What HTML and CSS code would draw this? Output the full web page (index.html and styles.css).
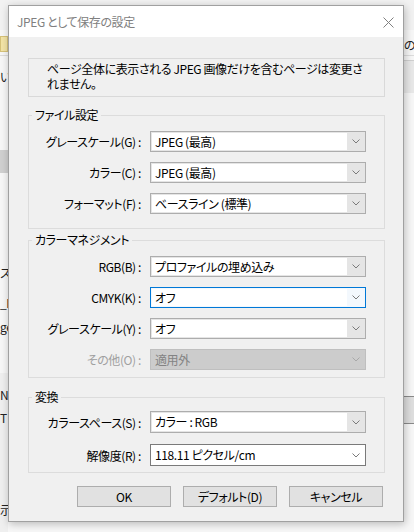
FILE: index.html
```html
<!DOCTYPE html>
<html lang="ja">
<head>
    <meta charset="UTF-8">
    <meta name="viewport" content="width=device-width, initial-scale=1.0">
    <title>JPEG として保存の設定</title>
    <link rel="stylesheet" href="styles.css">
</head>
<body>

    <div class="desktop">
        <!-- 背景のアプリ画面 -->
        <div class="app">
            <div class="app-top"></div>
            <div class="app-folder"></div>
            <div class="app-line l1"></div>
            <div class="app-text t1">い</div>
            <div class="app-block b1"></div>
            <div class="app-text t2">ス</div>
            <div class="app-text t3">_IN</div>
            <div class="app-text t4">ge</div>
            <div class="app-band"></div>
            <div class="app-text t5">N]</div>
            <div class="app-text t6">T</div>
            <div class="app-text t7">示</div>
            <div class="app-text r1">の</div>
            <div class="app-rband r2"></div>
            <div class="app-rband r3"></div>
        </div>

        <!-- ダイアログ -->
        <div class="dialog">
            <div class="titlebar">
                <span class="title">JPEG として保存の設定</span>
                <svg class="close" width="11" height="11" viewBox="0 0 11 11">
                    <path d="M0.5 0.5 L10.5 10.5 M10.5 0.5 L0.5 10.5" />
                </svg>
            </div>

            <div class="dialog-body">
                <div class="notice">
                    <div class="line">ページ全体に表示される JPEG 画像だけを含むページは変更さ</div>
                    <div class="line">れません。</div>
                </div>

                <fieldset class="group g1">
                    <legend>ファイル設定</legend>
                    <label>グレースケール(G) :</label>
                    <div class="combo"><span class="value">JPEG (最高)</span><span class="arrow"><svg viewBox="0 0 8 5"><polyline points="0.5,0.5 4,4 7.5,0.5" /></svg></span></div>

                    <label>カラー(C) :</label>
                    <div class="combo"><span class="value">JPEG (最高)</span><span class="arrow"><svg viewBox="0 0 8 5"><polyline points="0.5,0.5 4,4 7.5,0.5" /></svg></span></div>

                    <label>フォーマット(F) :</label>
                    <div class="combo"><span class="value">ベースライン (標準)</span><span class="arrow"><svg viewBox="0 0 8 5"><polyline points="0.5,0.5 4,4 7.5,0.5" /></svg></span></div>
                </fieldset>

                <fieldset class="group g2">
                    <legend>カラーマネジメント</legend>
                    <label>RGB(B) :</label>
                    <div class="combo"><span class="value">プロファイルの埋め込み</span><span class="arrow"><svg viewBox="0 0 8 5"><polyline points="0.5,0.5 4,4 7.5,0.5" /></svg></span></div>

                    <label>CMYK(K) :</label>
                    <div class="combo focus"><span class="value">オフ</span><span class="arrow"><svg viewBox="0 0 8 5"><polyline points="0.5,0.5 4,4 7.5,0.5" /></svg></span></div>

                    <label>グレースケール(Y) :</label>
                    <div class="combo"><span class="value">オフ</span><span class="arrow"><svg viewBox="0 0 8 5"><polyline points="0.5,0.5 4,4 7.5,0.5" /></svg></span></div>

                    <label class="disabled">その他(O) :</label>
                    <div class="combo disabled"><span class="value">適用外</span><span class="arrow"><svg viewBox="0 0 8 5"><polyline points="0.5,0.5 4,4 7.5,0.5" /></svg></span></div>
                </fieldset>

                <fieldset class="group g3">
                    <legend>変換</legend>
                    <label>カラースペース(S) :</label>
                    <div class="combo"><span class="value">カラー : RGB</span><span class="arrow"><svg viewBox="0 0 8 5"><polyline points="0.5,0.5 4,4 7.5,0.5" /></svg></span></div>

                    <label>解像度(R) :</label>
                    <div class="combo edit"><span class="value">118.11 ピクセル/cm</span><span class="arrow"><svg viewBox="0 0 8 5"><polyline points="0.5,0.5 4,4 7.5,0.5" /></svg></span></div>
                </fieldset>

                <div class="buttons">
                    <button>OK</button>
                    <button>デフォルト(D)</button>
                    <button>キャンセル</button>
                </div>
            </div>
        </div>
    </div>

</body>
</html>
```

FILE: styles.css
```css
body {
    margin: 0;
    padding: 0;
    font-family: "Noto Sans CJK JP", "Noto Sans", sans-serif;
    font-size: 12px;
    font-feature-settings: "palt";
    letter-spacing: -0.4px;
    color: #000;
}

.desktop {
    position: relative;
    width: 414px;
    height: 532px;
    overflow: hidden;
    background-color: #f7f7f7;
}

/* 背景のアプリ */
.app-top {
    position: absolute;
    left: 0;
    top: 0;
    width: 414px;
    height: 30px;
    background-color: #f2f2f2;
}

.app-folder {
    position: absolute;
    left: 0;
    top: 36px;
    width: 6px;
    height: 14px;
    background-color: #f3e4a6;
    border: 1px solid #d6c27a;
}

.app-line {
    position: absolute;
    left: 0;
    width: 414px;
    height: 1px;
    background-color: #dcdcdc;
}

.l1 {
    top: 55px;
}

.app-text {
    position: absolute;
    font-size: 12px;
    color: #222;
    line-height: 14px;
}

.t1 { left: 0; top: 70px; }
.t2 { left: 0; top: 266px; }
.t3 { left: 0; top: 296px; }
.t4 { left: 0; top: 320px; }
.t5 { left: 0; top: 388px; }
.t6 { left: 0; top: 411px; }
.t7 { left: 0; top: 503px; }
.r1 { left: 404px; top: 38px; }

.app-block {
    position: absolute;
    left: 0;
    top: 150px;
    width: 8px;
    height: 23px;
    background-color: #d0d0d0;
}

.app-band {
    position: absolute;
    left: 0;
    top: 373px;
    width: 8px;
    height: 159px;
    background-color: #efefef;
}

.app-rband {
    position: absolute;
    left: 404px;
    width: 10px;
    border-top: 1px solid #8a8a8a;
}

.r2 {
    top: 60px;
    height: 32px;
    background-color: #e8e8e8;
    border-top-color: #d0d0d0;
}

.r3 {
    top: 396px;
    height: 26px;
    background-color: #dedede;
    border-bottom: 1px solid #8a8a8a;
}

/* ダイアログ */
.dialog {
    position: absolute;
    left: 8px;
    top: 5px;
    width: 394px;
    background-color: #f0f0f0;
    border: 1px solid #a0a0a0;
    box-shadow: 1px 2px 8px rgba(0, 0, 0, 0.25);
}

.titlebar {
    height: 31px;
    background-color: #fff;
    display: flex;
    align-items: center;
    justify-content: space-between;
    padding: 0 9px 0 8px;
}

.title {
    color: #808080;
    font-size: 12px;
}

.close {
    stroke: #808080;
    stroke-width: 1;
    fill: none;
    margin-top: 1px;
}

.dialog-body {
    padding: 21px 18px 14px 19px;
}

.notice {
    border: 1px solid #d9d9d9;
    padding: 2px 4px 5px 18px;
}

.notice .line {
    height: 15px;
    line-height: 15px;
    white-space: nowrap;
}

/* グループ */
.group {
    margin: 10px 0 0 0;
    padding: 8px 0 14px 0;
    border: 1px solid #dcdcdc;
    display: grid;
    grid-template-columns: 112px 216px;
    column-gap: 9px;
    row-gap: 10px;
    align-items: center;
    min-width: 0;
}

.group legend {
    margin-left: 3px;
    padding: 0 3px;
    line-height: 16px;
    font-size: 12px;
}

.g2 {
    margin-top: 3px;
    padding-bottom: 7px;
}

.g3 {
    margin-top: 11px;
    padding-top: 6px;
    padding-bottom: 6px;
    row-gap: 11px;
}

.group label {
    text-align: right;
    white-space: nowrap;
}

.group label.disabled {
    color: #a0a0a0;
}

/* コンボボックス */
.combo {
    display: flex;
    height: 21px;
    box-sizing: border-box;
    border: 1px solid #adadad;
    background-color: #e5e5e5;
}

.g3 .combo {
    height: 22px;
}

.combo .value {
    flex: 1;
    background-color: #fff;
    margin: 1px 0 1px 1px;
    padding-left: 3px;
    line-height: 17px;
    white-space: nowrap;
}

.g3 .combo .value {
    line-height: 18px;
}

.combo .arrow {
    width: 18px;
    display: flex;
    align-items: center;
    justify-content: center;
}

.combo .arrow svg {
    width: 8px;
    height: 5px;
    fill: none;
    stroke: #7a7a7a;
    stroke-width: 1;
}

.combo.focus {
    border-color: #0078d7;
    background-color: #f3f8fd;
}

.combo.disabled {
    border-color: #bfbfbf;
    background-color: #cccccc;
}

.combo.disabled .value {
    background-color: #cccccc;
    color: #838383;
}

.combo.disabled .arrow svg {
    stroke: #a8a8a8;
}

.combo.edit {
    border-color: #7a7a7a;
    background-color: #fff;
}

/* ボタン */
.buttons {
    display: flex;
    justify-content: flex-end;
    gap: 12px;
    margin-top: 13px;
    padding-right: 2px;
}

.buttons button {
    width: 94px;
    height: 21px;
    background-color: #e1e1e1;
    border: 1px solid #adadad;
    font-family: "Noto Sans CJK JP", "Noto Sans", sans-serif;
    font-size: 12px;
    font-feature-settings: "palt";
    letter-spacing: -0.4px;
    color: #000;
    padding: 0;
}
```
